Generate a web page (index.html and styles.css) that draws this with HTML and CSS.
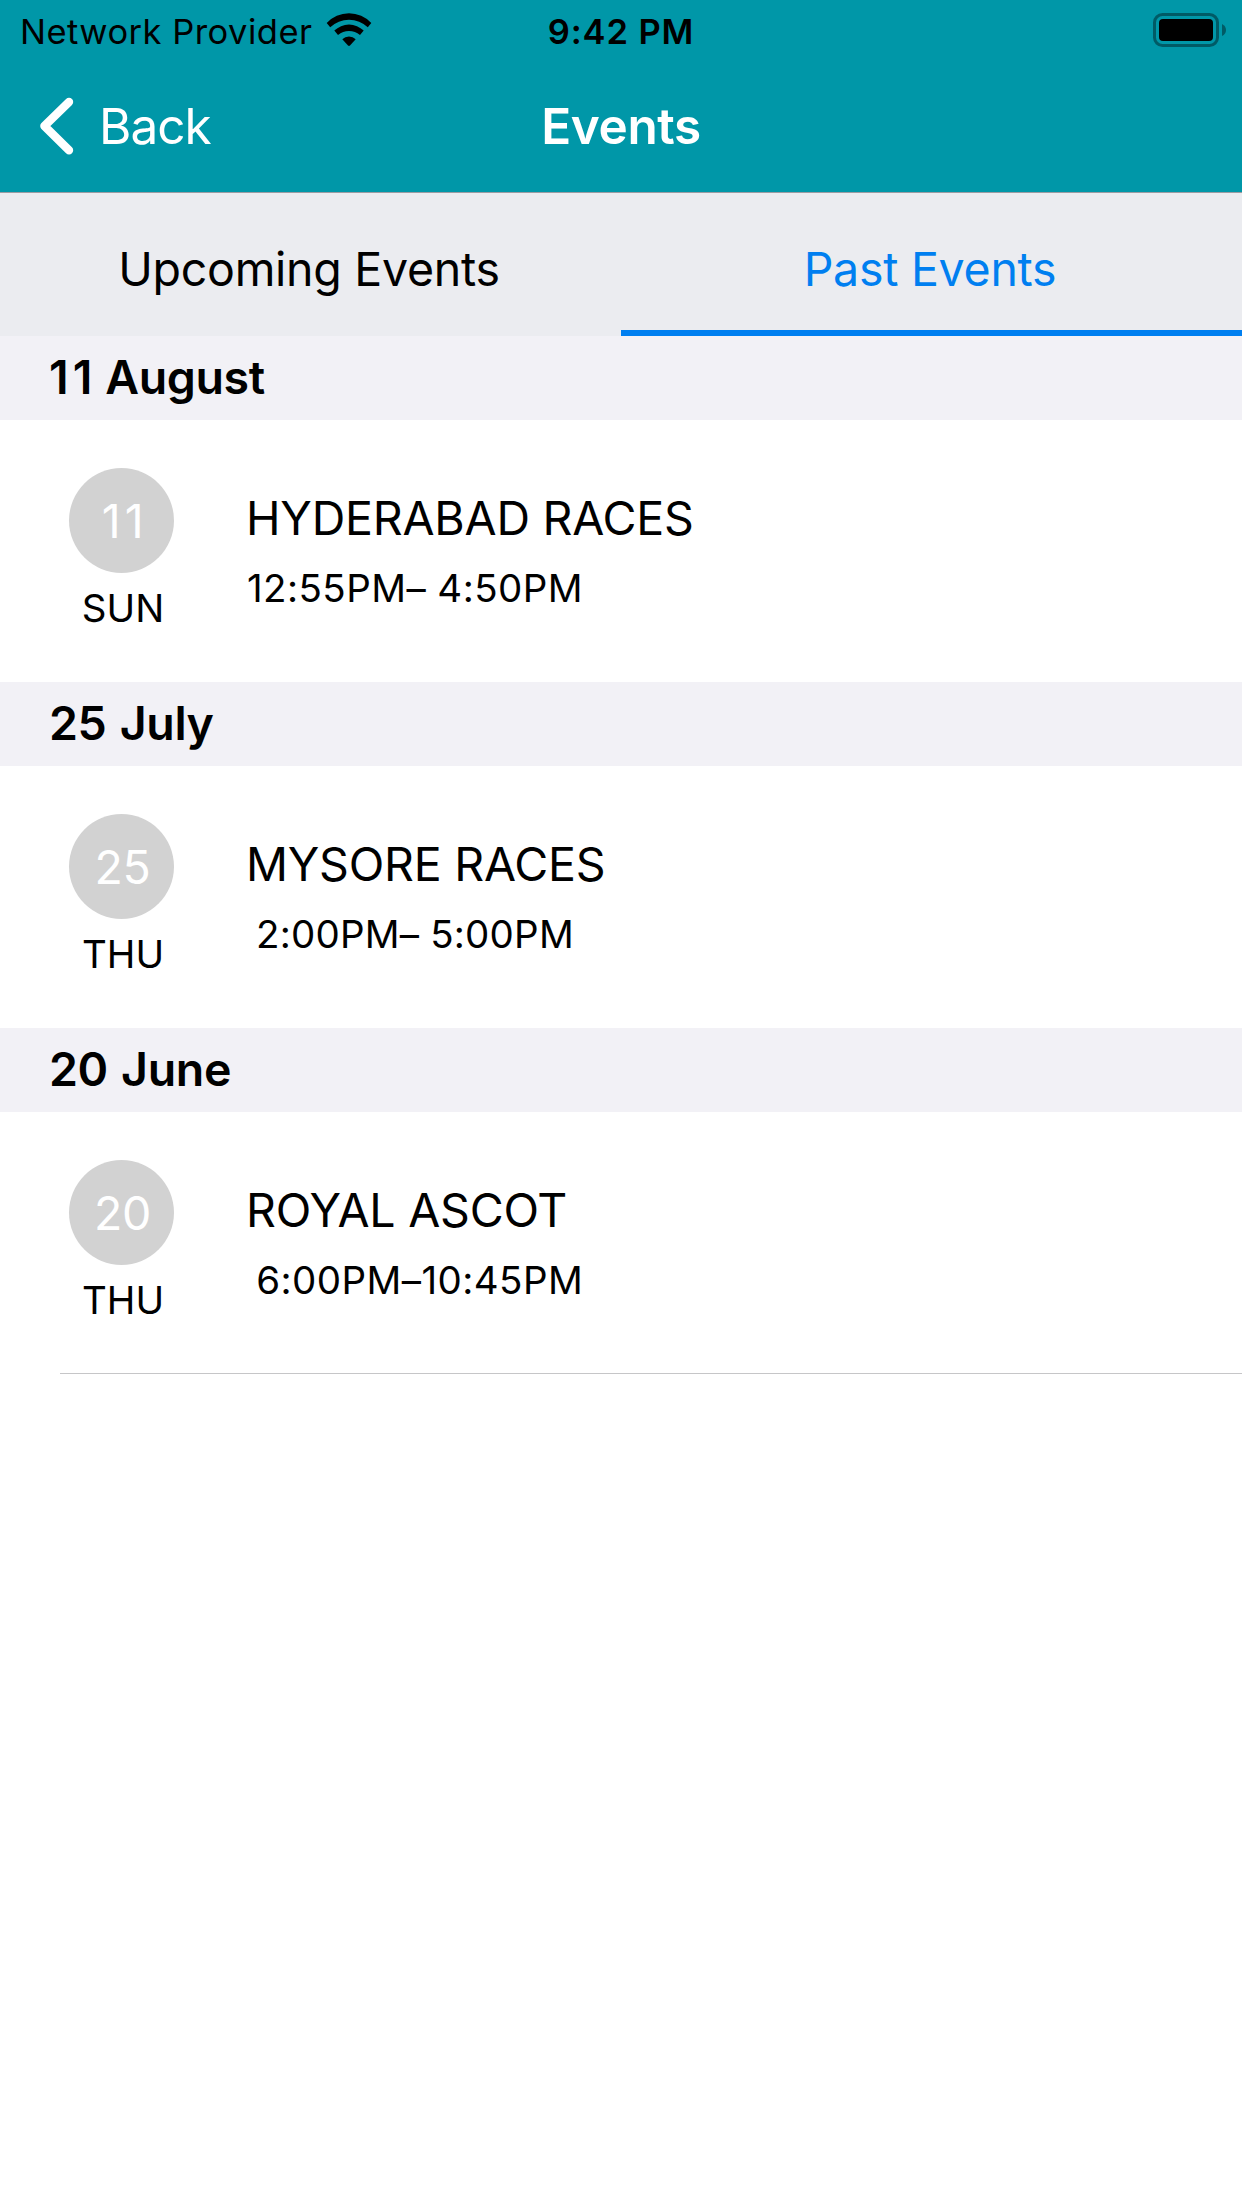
FILE: index.html
```
<!DOCTYPE html>
<html lang="en">
<head>
<meta charset="utf-8">
<title>Events</title>
<link rel="stylesheet" href="styles.css">
</head>
<body>
<header class="top">
  <div class="status">
    <div class="carrier">
      <span class="carrier-name">Network Provider</span>
      <svg class="wifi" width="46" height="36" viewBox="0 0 46 36">
        <path d="M.7 11A30.3 30.3 0 0 1 45.3 11L41.8 15.3A27.3 27.3 0 0 0 4.2 15.3Z"/>
        <path d="M8.3 18.6A21 21 0 0 1 37.7 18.6L34 22.9A17.5 17.5 0 0 0 12 22.9Z"/>
        <path d="M16.3 27.3A9.5 9.5 0 0 1 29.7 27.3L24 33.6Q23 34.5 22 33.6Z"/>
      </svg>
    </div>
    <time class="clock">9:42 PM</time>
    <svg class="battery" width="74" height="34" viewBox="0 0 74 34">
      <rect class="battery-case" x="1.5" y="1.5" width="63" height="31" rx="8"/>
      <rect x="6" y="6" width="54" height="22" rx="4"/>
      <path class="battery-tip" d="M69 11Q73 13 73 17T69 23Z"/>
    </svg>
  </div>
  <nav class="navbar">
    <a class="back">
      <svg width="34" height="58" viewBox="0 0 34 58"><path d="M29 4.9L4.4 29L29 53.3"/></svg>
      <span>Back</span>
    </a>
    <h1 class="title">Events</h1>
  </nav>
</header>
<div class="tabs">
  <a class="tab">Upcoming Events</a>
  <a class="tab active">Past Events</a>
</div>
<main>
  <section>
    <h2 class="month"><span class="wide">1</span>1 August</h2>
    <article class="event">
      <div class="date"><div class="num"><span class="wide">1</span>1</div><div class="day">SUN</div></div>
      <div class="info"><div class="name">HYDERABAD RACES</div><div class="time">12:55PM– 4:50PM</div></div>
    </article>
  </section>
  <section>
    <h2 class="month">25 July</h2>
    <article class="event">
      <div class="date"><div class="num">25</div><div class="day">THU</div></div>
      <div class="info"><div class="name">MYSORE RACES</div><div class="time early"> 2:00PM– 5:00PM</div></div>
    </article>
  </section>
  <section>
    <h2 class="month">20 June</h2>
    <article class="event">
      <div class="date"><div class="num">20</div><div class="day">THU</div></div>
      <div class="info"><div class="name">ROYAL ASCOT</div><div class="time late"> 6:00PM–10:45PM</div></div>
    </article>
  </section>
  <hr class="end">
</main>
</body>
</html>
```
FILE: styles.css
```
* { box-sizing: border-box; }
body {
  margin: 0;
  min-height: 2208px;
  background: #fff;
  color: #000;
  font-family: Inter, "Liberation Sans", sans-serif;
}
.top {
  height: 193px;
  background: #0097a8;
  border-bottom: 1px solid #9b9ca3;
}
.status {
  display: grid;
  grid-template-columns: 1fr auto 1fr;
  align-items: center;
  height: 60px;
  padding: 0 20px;
  font-size: 34.5px;
  line-height: 56px;
}
.carrier { display: flex; align-items: center; gap: 14px; letter-spacing: 0.48px; }
.carrier-name, .clock { padding-top: 3px; }
.clock { font-weight: 600; letter-spacing: 0.9px; }
.battery { justify-self: end; margin-right: -5px; }
.battery-case { fill: none; stroke: #005b66; stroke-width: 3; }
.battery-tip { fill: #005b66; }
.navbar {
  display: grid;
  grid-template-columns: 1fr auto 1fr;
  align-items: center;
  height: 132px;
  padding: 0 40px;
  color: #fff;
  font-size: 49.5px;
  line-height: 60px;
}
.back { display: flex; align-items: center; gap: 25px; letter-spacing: -1px; }
.back svg { fill: none; stroke: #fff; stroke-width: 8.4; stroke-linecap: round; stroke-linejoin: round; }
.title { margin: 0; font-size: inherit; font-weight: 600; letter-spacing: -0.4px; }
.tabs { display: flex; height: 143px; background: #ebecf0; }
.tab {
  flex: 1;
  padding: 46px 3px 0 0;
  text-align: center;
  font-size: 46.5px;
  line-height: 60px;
  letter-spacing: -0.27px;
}
.tab.active { color: #007ff0; border-bottom: 6px solid #007ff0; }
.month {
  height: 84px;
  margin: 0;
  padding-left: 49px;
  background: #f2f1f6;
  font-size: 46.5px;
  font-weight: 600;
  line-height: 82px;
  letter-spacing: -0.35px;
  word-spacing: 1.8px;
}
.wide { letter-spacing: 4px; }
.event { display: flex; gap: 72px; height: 262px; padding-left: 69px; }
.date { width: 105px; padding-top: 48px; text-align: center; }
.num {
  height: 105px;
  padding-left: 2px;
  border-radius: 50%;
  background: #d2d2d2;
  color: #fff;
  font-size: 46.5px;
  line-height: 106px;
  letter-spacing: -0.4px;
}
.day { margin-top: 5px; padding-left: 3px; font-size: 38.5px; line-height: 60px; }
.info { padding-top: 68px; }
.name { font-size: 46.5px; line-height: 60px; letter-spacing: -0.22px; }
.time { margin-top: 12px; padding-left: 1px; font-size: 38.5px; line-height: 56px; letter-spacing: 0.43px; white-space: pre; }
.early, .late { padding-left: 0; text-indent: -1px; }
.early { letter-spacing: 0.2px; }
.end { height: 1px; margin: -1px 0 0 60px; border: 0; background: #c6c6c8; }
```
